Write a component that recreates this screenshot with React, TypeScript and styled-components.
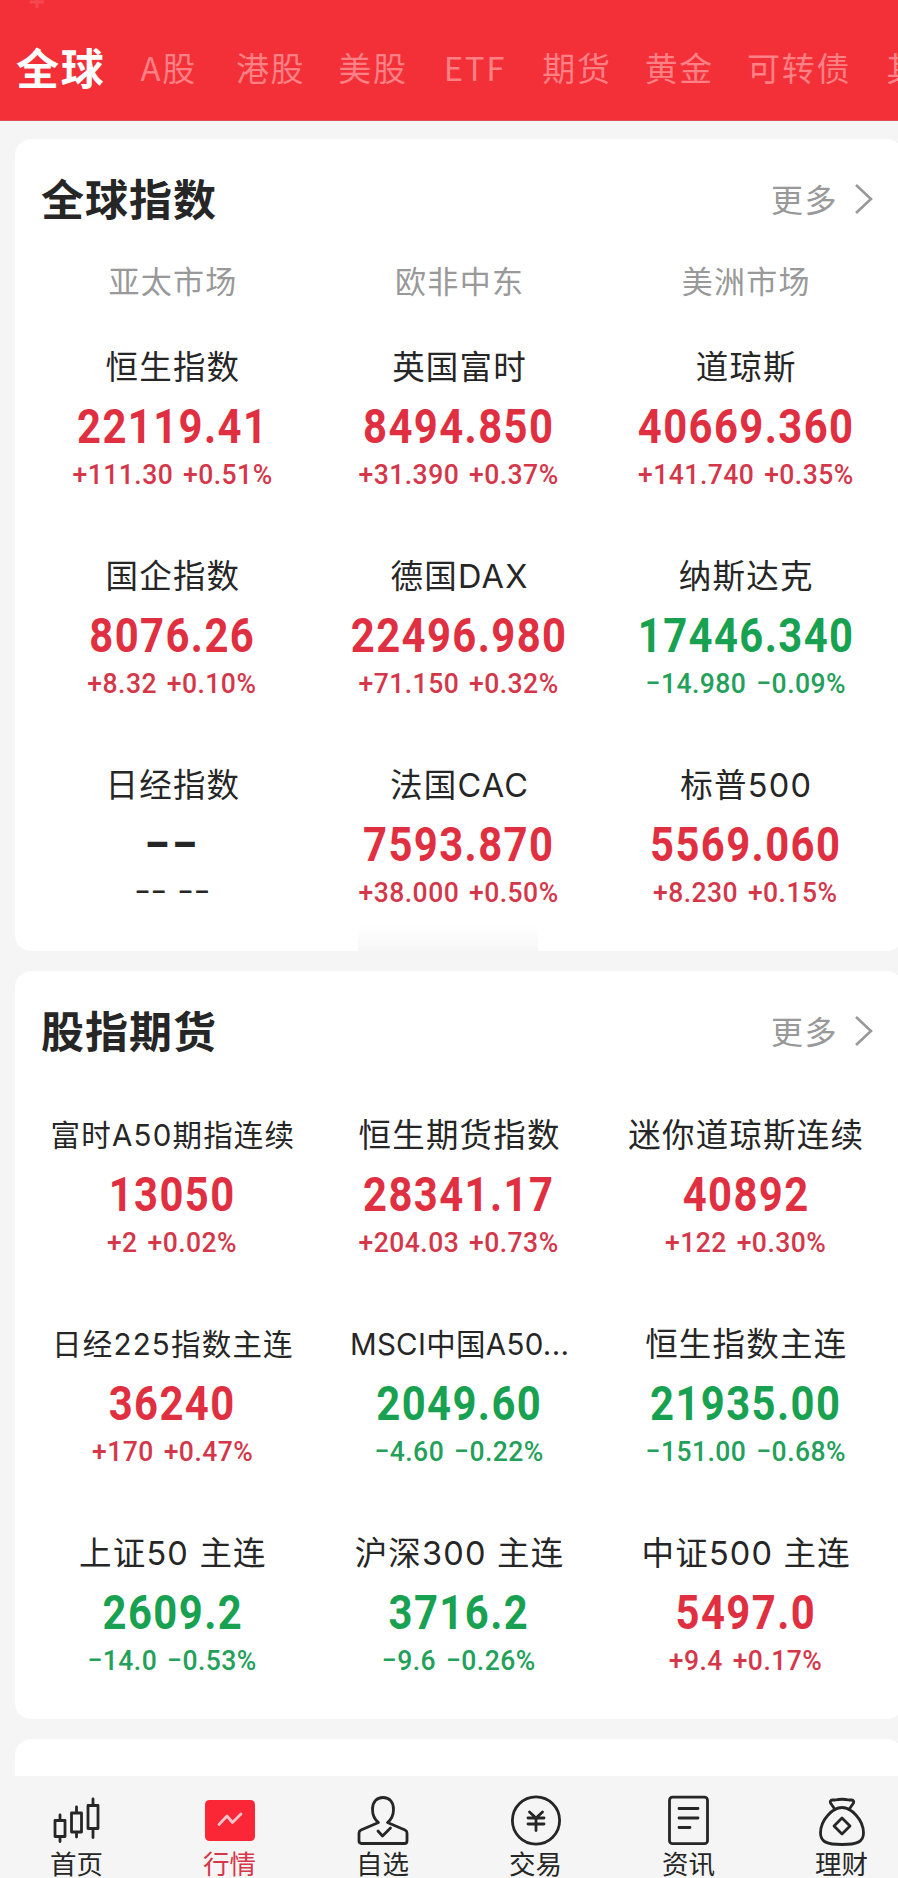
import React from "react";
import styled, { createGlobalStyle } from "styled-components";

const GlobalStyle = createGlobalStyle`
  * { box-sizing: border-box; }
  html, body { margin: 0; padding: 0; background: #f5f5f5; }
  body { font-family: Inter, "Noto Sans CJK SC", sans-serif; color: #262626; overflow: hidden; }
`;

const Page = styled.div`
  position: relative;
  display: flex;
  flex-direction: column;
  width: 898px;
  height: 1878px;
  overflow: hidden;
  background: #f5f5f5;
`;

const Header = styled.header`
  position: relative;
  flex: none;
  height: 121px;
  padding: 13px 0 0 16px;
  display: flex;
  align-items: center;
  background: #f32f38;
  border-bottom: 1px solid #d9505a;
  overflow: hidden;
`;

const HeaderMark = styled.svg`
  position: absolute;
  left: 29px;
  top: 0;
  width: 16px;
  height: 8px;
`;

const Tabs = styled.nav`
  display: flex;
  align-items: center;
  gap: 33px;
`;

const Tab = styled.a<{ $active?: boolean; $before?: number; $after?: number }>`
  flex: none;
  margin: 0 ${(p) => p.$after ?? 0}px 0 ${(p) => p.$before ?? 0}px;
  padding-bottom: ${(p) => (p.$active ? 2 : 0)}px;
  line-height: 60px;
  white-space: nowrap;
  font-size: ${(p) => (p.$active ? 43 : 33)}px;
  font-weight: ${(p) => (p.$active ? 700 : 400)};
  font-family: "Noto Sans CJK SC", sans-serif;
  letter-spacing: 1.7px;
  color: ${(p) => (p.$active ? "#fff" : "#ff8085")};
`;

const Content = styled.main`
  flex: none;
  height: 1655px;
  padding: 18px 0 0 15px;
  display: flex;
  flex-direction: column;
  gap: 20px;
  overflow: hidden;
`;

const Card = styled.section<{ $height: number }>`
  position: relative;
  flex: none;
  width: 888px;
  height: ${(p) => p.$height}px;
  padding: 0 14px;
  background: #fff;
  border-radius: 16px;
`;

const CardHead = styled.div`
  display: flex;
  align-items: center;
  justify-content: space-between;
  height: 120px;
  padding: 0 16px 0 12px;
`;

const CardTitle = styled.h2`
  margin: 0;
  padding-bottom: 4px;
  font-family: "Noto Sans CJK SC", sans-serif;
  font-size: 43px;
  line-height: 60px;
  letter-spacing: 1px;
  font-weight: 700;
`;

const More = styled.a`
  display: flex;
  align-items: center;
  gap: 17px;
  font-size: 32px;
  letter-spacing: 1.5px;
  color: #999;
`;

const MoreLabel = styled.span`
  padding-bottom: 3px;
`;

const Grid = styled.div<{ $top?: number }>`
  display: grid;
  grid-template-columns: repeat(3, 1fr);
  padding-top: ${(p) => p.$top ?? 0}px;
`;

const Market = styled.div`
  height: 85px;
  text-align: center;
  font-size: 31px;
  line-height: 46px;
  letter-spacing: 1.3px;
  text-indent: 1.3px;
  color: #999;
`;

const Quote = styled.div`
  display: flex;
  flex-direction: column;
  align-items: center;
  height: 209px;
  white-space: nowrap;
`;

const Name = styled.div<{ $size?: number; $spacing?: number }>`
  font-size: ${(p) => p.$size ?? 32.5}px;
  letter-spacing: ${(p) => p.$spacing ?? 1.2}px;
  text-indent: 1.2px;
  padding-top: ${(p) => (p.$size ? 0 : 1)}px;
  line-height: 46px;
  height: 46px;
`;

const tones = {
  up: { price: "#df2f40", change: "#d4374a" },
  down: { price: "#17a150", change: "#23a05a" },
  flat: { price: "#262626", change: "#262626" },
};
type Tone = keyof typeof tones;

const Price = styled.div<{ $tone: Tone }>`
  margin-top: 9px;
  height: 56px;
  line-height: 56px;
  font-family: Roboto, sans-serif;
  font-size: 47.5px;
  font-weight: 700;
  letter-spacing: 1.6px;
  transform: scaleX(${(p) => (p.$tone === "flat" ? 0.98 : 0.88)});
  color: ${(p) => tones[p.$tone].price};
`;

const Change = styled.div<{ $tone: Tone }>`
  height: 40px;
  line-height: 40px;
  font-family: Roboto, sans-serif;
  font-size: 28.5px;
  font-weight: 500;
  letter-spacing: 0.5px;
  word-spacing: 3px;
  transform: scaleX(${(p) => (p.$tone === "flat" ? 0.99 : 0.93)});
  color: ${(p) => tones[p.$tone].change};
`;

const Fade = styled.div`
  position: absolute;
  left: 343px;
  bottom: 0;
  width: 180px;
  height: 26px;
  background: linear-gradient(#ffffff, #f6f6f6);
`;

const BottomBar = styled.nav`
  flex: none;
  height: 102px;
  display: grid;
  grid-template-columns: repeat(6, 153px);
  background: #f5f5f5;
`;

const NavItem = styled.a<{ $active?: boolean }>`
  display: flex;
  flex-direction: column;
  align-items: center;
  padding-top: 20px;
  color: ${(p) => (p.$active ? "#d6384a" : "#262626")};
`;

const NavIcon = styled.svg`
  width: 54px;
  height: 54px;
  overflow: visible;
  fill: none;
  stroke: #262626;
  stroke-width: 2.8;
  stroke-linejoin: round;
  stroke-linecap: round;
`;

const NavLabel = styled.span`
  margin-top: -4px;
  font-size: 26.5px;
  line-height: 37px;
  white-space: nowrap;
`;

interface Item {
  name: string;
  price: string;
  change: string;
  tone: Tone;
  size?: number;
  spacing?: number;
}

const tabs: { label: string; before?: number; after?: number }[] = [
  { label: "A股", before: 2, after: 6 },
  { label: "港股" },
  { label: "美股" },
  { label: "ETF", before: 3, after: 3 },
  { label: "期货" },
  { label: "黄金" },
  { label: "可转债", after: 2 },
  { label: "其他" },
];

const indices: Item[] = [
  { name: "恒生指数", price: "22119.41", change: "+111.30 +0.51%", tone: "up" },
  { name: "英国富时", price: "8494.850", change: "+31.390 +0.37%", tone: "up" },
  { name: "道琼斯", price: "40669.360", change: "+141.740 +0.35%", tone: "up" },
  { name: "国企指数", price: "8076.26", change: "+8.32 +0.10%", tone: "up" },
  { name: "德国DAX", price: "22496.980", change: "+71.150 +0.32%", tone: "up" },
  { name: "纳斯达克", price: "17446.340", change: "−14.980 −0.09%", tone: "down" },
  { name: "日经指数", price: "−−", change: "−− −−", tone: "flat" },
  { name: "法国CAC", price: "7593.870", change: "+38.000 +0.50%", tone: "up" },
  { name: "标普500", price: "5569.060", change: "+8.230 +0.15%", tone: "up" },
];

const futures: Item[] = [
  { name: "富时A50期指连续", price: "13050", change: "+2 +0.02%", tone: "up", size: 29.5 },
  { name: "恒生期货指数", price: "28341.17", change: "+204.03 +0.73%", tone: "up" },
  { name: "迷你道琼斯连续", price: "40892", change: "+122 +0.30%", tone: "up" },
  { name: "日经225指数主连", price: "36240", change: "+170 +0.47%", tone: "up", size: 29.5 },
  { name: "MSCI中国A50...", price: "2049.60", change: "−4.60 −0.22%", tone: "down", size: 29.5, spacing: 0.3 },
  { name: "恒生指数主连", price: "21935.00", change: "−151.00 −0.68%", tone: "down" },
  { name: "上证50 主连", price: "2609.2", change: "−14.0 −0.53%", tone: "down" },
  { name: "沪深300 主连", price: "3716.2", change: "−9.6 −0.26%", tone: "down" },
  { name: "中证500 主连", price: "5497.0", change: "+9.4 +0.17%", tone: "up" },
];

const QuoteCell = ({ item }: { item: Item }) => (
  <Quote>
    <Name $size={item.size} $spacing={item.spacing}>{item.name}</Name>
    <Price $tone={item.tone}>{item.price}</Price>
    <Change $tone={item.tone}>{item.change}</Change>
  </Quote>
);

const Head = ({ title }: { title: string }) => (
  <CardHead>
    <CardTitle>{title}</CardTitle>
    <More>
      <MoreLabel>更多</MoreLabel>
      <svg width="18" height="32" viewBox="0 0 18 32" fill="none" stroke="#999" strokeWidth="2.6">
        <path d="M1 2 L16 16 L1 30" />
      </svg>
    </More>
  </CardHead>
);

export default function App() {
  return (
    <Page>
      <GlobalStyle />
      <Header>
        <HeaderMark viewBox="0 0 16 8" stroke="#f6494f" strokeWidth="3">
          <path d="M1 2H15M8 0V8" />
        </HeaderMark>
        <Tabs>
          <Tab $active>全球</Tab>
          {tabs.map((t) => (
            <Tab key={t.label} $before={t.before} $after={t.after}>{t.label}</Tab>
          ))}
        </Tabs>
      </Header>
      <Content>
        <Card $height={812}>
          <Head title="全球指数" />
          <Grid>
            {["亚太市场", "欧非中东", "美洲市场"].map((m) => (
              <Market key={m}>{m}</Market>
            ))}
            {indices.map((i) => (
              <QuoteCell key={i.name} item={i} />
            ))}
          </Grid>
          <Fade />
        </Card>
        <Card $height={748}>
          <Head title="股指期货" />
          <Grid $top={21}>
            {futures.map((i) => (
              <QuoteCell key={i.name} item={i} />
            ))}
          </Grid>
        </Card>
        <Card $height={90} />
      </Content>
      <BottomBar>
        <NavItem>
          <NavIcon viewBox="0 0 54 54">
            <path d="M5 24.5h10v16H5zM10 19v5.500M10 40.500v5M21.500 17h10v19h-10zM26.500 11v6M26.500 36v5M38 9.500h10v23H38zM43 3v6.500M43 32.500v9" />
          </NavIcon>
          <NavLabel>首页</NavLabel>
        </NavItem>
        <NavItem $active>
          <NavIcon viewBox="0 0 54 54">
            <rect x="2" y="4" width="50" height="41" rx="4.500" fill="#fb2737" stroke="none" />
            <path d="M16 28.500 L24 20 L29.500 26.500 L38 18" stroke="#ffc4ca" />
          </NavIcon>
          <NavLabel>行情</NavLabel>
        </NavItem>
        <NavItem>
          <NavIcon viewBox="0 0 54 54">
            <path d="M22.500 26.500C18 23 16.500 19 16.500 13.500C16.500 6 20.500 1.500 27 1.500S37.500 6 37.500 13.500C37.500 19 36 23 31.500 26.500L49 34Q51 35 51 37V45Q51 47.500 48.500 47.500H5.500Q3 47.500 3 45V37Q3 35 5 34Z" />
            <path d="M22 35L26.500 40L34.500 32" />
          </NavIcon>
          <NavLabel>自选</NavLabel>
        </NavItem>
        <NavItem>
          <NavIcon viewBox="0 0 54 54">
            <circle cx="27" cy="24.500" r="23.600" />
            <path d="M20.500 16L27 22L33.500 16M19 22H35M19 28H35M27 22V34.500" />
          </NavIcon>
          <NavLabel>交易</NavLabel>
        </NavItem>
        <NavItem>
          <NavIcon viewBox="0 0 54 54">
            <rect x="7.500" y="1.200" width="38" height="46.500" rx="3" />
            <path d="M17 12.500H36M17 22H36M17 31.500H28" />
          </NavIcon>
          <NavLabel>资讯</NavLabel>
        </NavItem>
        <NavItem>
          <NavIcon viewBox="0 0 54 54">
            <path d="M20 13.500L15.500 7Q14.500 4.500 17.500 4H20Q27 2.500 34 4H36.500Q39.500 4.500 38.500 7L34 13.500" />
            <path d="M27 11.500C18 11.500 5.500 23.500 5.500 37C5.500 46 12 48.500 27 48.500S48.500 46 48.500 37C48.500 23.500 36 11.500 27 11.500Z" />
            <path d="M27 22L35 30L27 38L19 30Z" />
          </NavIcon>
          <NavLabel>理财</NavLabel>
        </NavItem>
      </BottomBar>
    </Page>
  );
}
